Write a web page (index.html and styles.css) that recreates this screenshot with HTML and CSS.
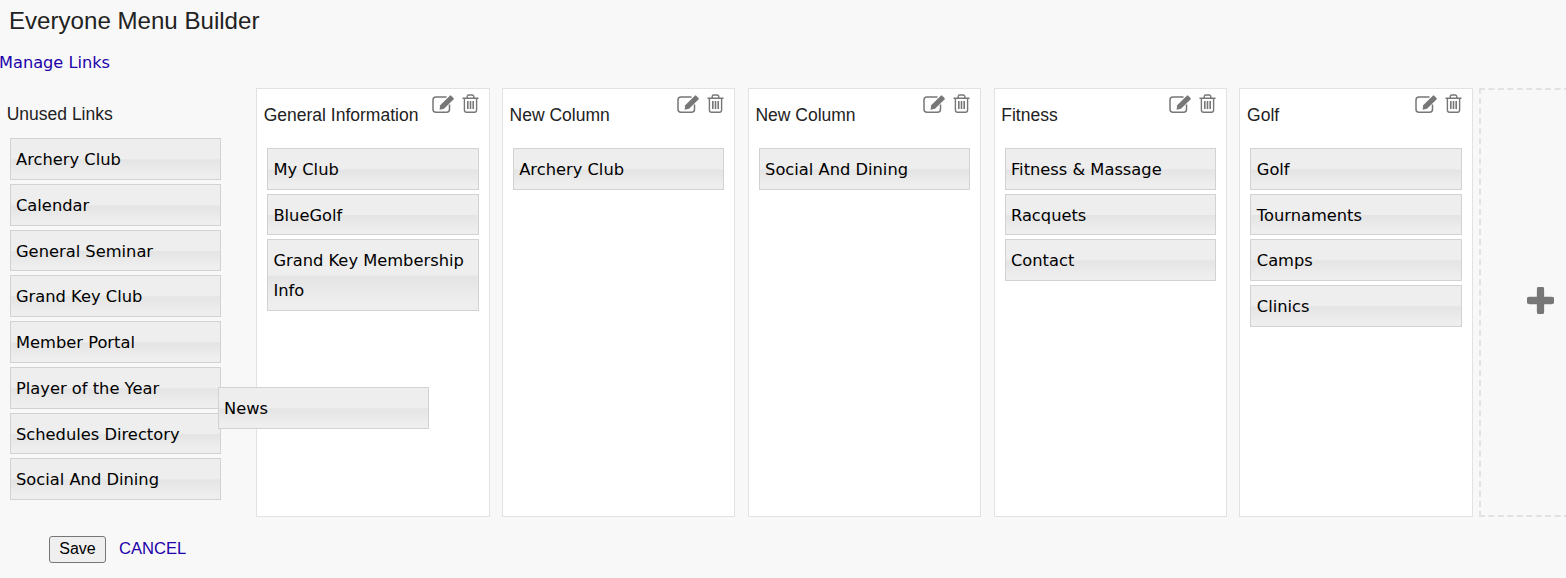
FILE: index.html
```html
<!DOCTYPE html>
<html lang="en">

<head>
    <meta charset="UTF-8">
    <title>Everyone Menu Builder</title>
    <link rel="stylesheet" href="styles.css">
</head>

<body>
    <h1 class="page-title">Everyone Menu Builder</h1>
    <a class="manage-link" href="#">Manage Links</a>

    <div class="builder">
        <div class="unused">
            <h2 class="unused-title">Unused Links</h2>
            <div class="item">Archery Club</div>
            <div class="item">Calendar</div>
            <div class="item">General Seminar</div>
            <div class="item">Grand Key Club</div>
            <div class="item">Member Portal</div>
            <div class="item">Player of the Year</div>
            <div class="item">Schedules Directory</div>
            <div class="item">Social And Dining</div>
        </div>

        <div class="columns">
            <div class="column">
                <div class="column-head">
                    <h3 class="column-title">General Information</h3>
                    <div class="tools">
                        <svg class="icon-edit" viewBox="0 0 23 19"><use href="#edit"></use></svg>
                        <svg class="icon-trash" viewBox="0 0 17 19"><use href="#trash"></use></svg>
                    </div>
                </div>
                <div class="item">My Club</div>
                <div class="item">BlueGolf</div>
                <div class="item">Grand Key Membership Info</div>
            </div>
            <div class="column">
                <div class="column-head">
                    <h3 class="column-title">New Column</h3>
                    <div class="tools">
                        <svg class="icon-edit" viewBox="0 0 23 19"><use href="#edit"></use></svg>
                        <svg class="icon-trash" viewBox="0 0 17 19"><use href="#trash"></use></svg>
                    </div>
                </div>
                <div class="item">Archery Club</div>
            </div>
            <div class="column">
                <div class="column-head">
                    <h3 class="column-title">New Column</h3>
                    <div class="tools">
                        <svg class="icon-edit" viewBox="0 0 23 19"><use href="#edit"></use></svg>
                        <svg class="icon-trash" viewBox="0 0 17 19"><use href="#trash"></use></svg>
                    </div>
                </div>
                <div class="item">Social And Dining</div>
            </div>
            <div class="column">
                <div class="column-head">
                    <h3 class="column-title">Fitness</h3>
                    <div class="tools">
                        <svg class="icon-edit" viewBox="0 0 23 19"><use href="#edit"></use></svg>
                        <svg class="icon-trash" viewBox="0 0 17 19"><use href="#trash"></use></svg>
                    </div>
                </div>
                <div class="item">Fitness &amp; Massage</div>
                <div class="item">Racquets</div>
                <div class="item">Contact</div>
            </div>
            <div class="column">
                <div class="column-head">
                    <h3 class="column-title">Golf</h3>
                    <div class="tools">
                        <svg class="icon-edit" viewBox="0 0 23 19"><use href="#edit"></use></svg>
                        <svg class="icon-trash" viewBox="0 0 17 19"><use href="#trash"></use></svg>
                    </div>
                </div>
                <div class="item">Golf</div>
                <div class="item">Tournaments</div>
                <div class="item">Camps</div>
                <div class="item">Clinics</div>
            </div>
            <div class="add-column">
                <svg class="icon-plus" viewBox="0 0 26 26">
                    <path d="M13 2.5V23.5M2.5 13H23.5" fill="none" stroke="#777" stroke-width="7" stroke-linecap="round"></path>
                </svg>
            </div>
        </div>

        <!-- item being dragged -->
        <div class="item dragging">News</div>
    </div>

    <div class="actions">
        <button class="save" type="button">Save</button>
        <a class="cancel" href="#">CANCEL</a>
    </div>

    <svg class="icon-defs" aria-hidden="true">
        <symbol id="edit" viewBox="0 0 23 19">
            <path d="M17.5 10.5v4.7a3 3 0 0 1-3 3H4a3 3 0 0 1-3-3V6a3 3 0 0 1 3-3h10.5" fill="none" stroke="#777" stroke-width="1.5"></path>
            <path d="M8.2 11.2 17.8 1.7a1 1 0 0 1 1.4 0l2.3 2.3a1 1 0 0 1 0 1.4L12 14.8l-4.4.9z" fill="#777"></path>
        </symbol>
        <symbol id="trash" viewBox="0 0 17 19">
            <path d="M.5 4.2h16M5.2 4V2.6A1.6 1.6 0 0 1 6.8 1h3.4a1.6 1.6 0 0 1 1.6 1.6V4M2.4 4.2V16a2.2 2.2 0 0 0 2.2 2.2h7.8a2.2 2.2 0 0 0 2.2-2.2V4.2" fill="none" stroke="#777" stroke-width="1.4"></path>
            <path d="M5.8 7v8M8.5 7v8M11.2 7v8" fill="none" stroke="#777" stroke-width="1.6"></path>
        </symbol>
    </svg>
</body>

</html>
```

FILE: styles.css
```css
* {
    box-sizing: border-box;
}

body {
    margin: 0;
    height: 578px;
    overflow: hidden;
    background-color: #f8f8f8;
    color: #222;
    font-family: "Liberation Sans", Arial, sans-serif;
}

.page-title {
    margin: 0;
    padding: 7px 0 0 9px;
    height: 52px;
    font-size: 24.1px;
    font-weight: normal;
    line-height: 28px;
}

.manage-link {
    display: block;
    height: 36px;
    margin-left: -1px;
    padding-top: 1px;
    font-family: "DejaVu Sans", Verdana, sans-serif;
    font-size: 16.2px;
    line-height: 20px;
    color: #2200aa;
    text-decoration: none;
}

/* builder area */
.builder {
    position: relative;
    display: flex;
}

.unused {
    width: 256px;
    flex-shrink: 0;
    padding: 16px 35px 0 10px;
}

.unused-title {
    margin: 0 0 13.3px -3.3px;
    font-size: 17.5px;
    font-weight: normal;
    line-height: 21px;
}

.columns {
    display: flex;
    flex: 1;
    gap: 12.25px;
    height: 429px;
}

.column {
    width: 233.6px;
    flex-shrink: 0;
    padding: 0 10px;
    background-color: #fff;
    border: 1px solid #e2e2e2;
}

.column-head {
    position: relative;
    height: 59px;
}

.column-title {
    margin: 0 0 0 -3.3px;
    padding-top: 16px;
    font-size: 17.5px;
    font-weight: normal;
    line-height: 21px;
}

.tools {
    position: absolute;
    top: 5px;
    right: 0;
    display: flex;
    gap: 7px;
}

.icon-edit {
    width: 23px;
    height: 19px;
}

.icon-trash {
    width: 17px;
    height: 19px;
}

.icon-defs {
    display: none;
}

.add-column {
    flex: 1;
    margin-left: -6px;
    margin-right: -4px;
    display: flex;
    align-items: center;
    padding-left: 46px;
    padding-bottom: 4px;
    border: 2px dashed #e2e2e2;
}

.icon-plus {
    width: 27px;
    height: 27px;
}

/* link items */
.item {
    margin-bottom: 4px;
    padding: 6px 5px 4px;
    border: 1px solid #d2d2d2;
    font-family: "DejaVu Sans", Verdana, sans-serif;
    font-size: 16.3px;
    line-height: 29.72px;
    color: #000;
    background: linear-gradient(to bottom, #eeeeee 0%, #eeeeee 50%, #e4e4e4 52%, #eeeeee 90%);
}

.column .item {
    padding-left: 5.4px;
}

.dragging {
    position: absolute;
    left: 218px;
    top: 299px;
    width: 211px;
    margin: 0;
}

.actions {
    display: flex;
    align-items: center;
    gap: 13px;
    padding: 19px 0 0 49px;
}

.save {
    height: 27px;
    width: 57px;
    padding: 0 0 2px;
    background-color: #efefef;
    border: 1px solid #767676;
    border-radius: 3px;
    color: #000;
    font-family: "Liberation Sans", Arial, sans-serif;
    font-size: 16px;
}

.cancel {
    margin-top: -2px;
    font-size: 16.6px;
    color: #2200aa;
    text-decoration: none;
}
```
